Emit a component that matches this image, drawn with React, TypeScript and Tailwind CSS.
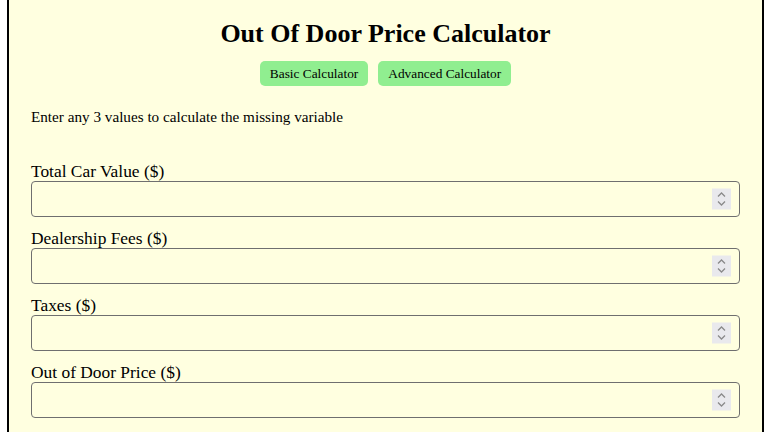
import React from "react";

const fields = [
  "Total Car Value ($)",
  "Dealership Fees ($)",
  "Taxes ($)",
  "Out of Door Price ($)",
];

function Spinner() {
  return (
    <span className="pointer-events-none absolute right-[9px] top-1/2 flex h-[21px] w-[19px] -translate-y-1/2 items-center justify-center bg-[#e9e9ed]">
      <svg width="9" height="15" viewBox="0 0 9 15" fill="none" stroke="#8a8a8a" strokeWidth="1.3">
        <path d="M1 5l3.5-3.5L8 5" />
        <path d="M1 10l3.5 3.5L8 10" />
      </svg>
    </span>
  );
}

export default function App() {
  return (
    <div className="min-h-screen bg-white pl-[7px] pr-[4px] font-['Liberation_Serif',serif] text-black">
      <div className="min-h-[432px] border-x-2 border-black bg-[#ffffe0] px-[22px] pt-[19px]">
        <h1 className="text-center text-[26px] font-bold leading-[30px]">
          Out Of Door Price Calculator
        </h1>
        <div className="mt-[12px] flex justify-center gap-[10px]">
          <button className="h-[25px] rounded-[5px] bg-[#90ee90] px-[10px] text-[13.33px]">
            Basic Calculator
          </button>
          <button className="h-[25px] rounded-[5px] bg-[#90ee90] px-[10px] text-[13.33px]">
            Advanced Calculator
          </button>
        </div>
        <p className="mt-[22px] text-[15.2px] leading-[18px]">
          Enter any 3 values to calculate the missing variable
        </p>
        <div className="mt-[35px]">
          {fields.map((f) => (
            <div key={f} className="mb-[11px]">
              <label className="block text-[17.4px] leading-[20px]">{f}</label>
              <div className="relative">
                <input
                  type="number"
                  className="block h-[36px] w-full rounded-[4px] border border-[#6f6f6f] bg-transparent px-2"
                />
                <Spinner />
              </div>
            </div>
          ))}
        </div>
      </div>
    </div>
  );
}
